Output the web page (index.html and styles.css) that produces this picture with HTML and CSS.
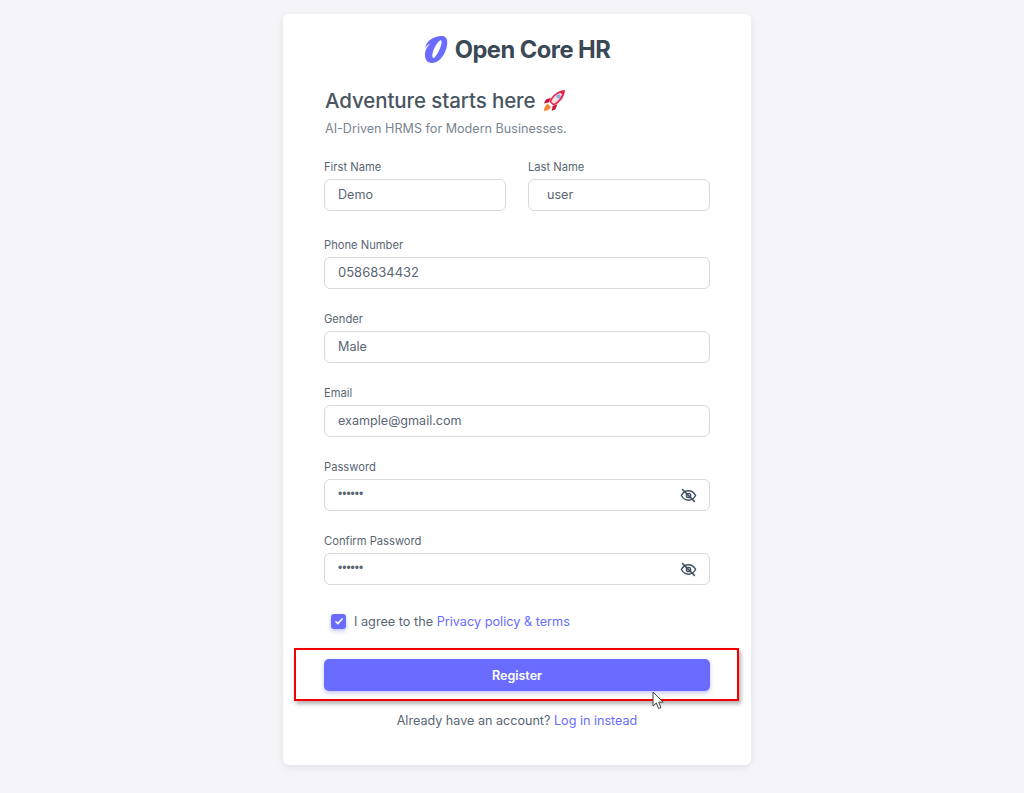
FILE: index.html
```html
<!DOCTYPE html>
<html lang="en">
<head>
  <meta charset="UTF-8" />
  <title>Register - Open Core HR</title>
  <link rel="stylesheet" href="styles.css">
</head>
<body>
  <div class="card">
    <div class="brand">
      <svg class="brand-mark" width="24" height="29" viewBox="0 0 24 29" aria-hidden="true">
        <path fill-rule="evenodd" d="M16.500 1C21 .5 23.500 3 23.300 8 23 15 18.500 25 11 27.500 5.500 29 1.500 26.500 1 21 .6 16 3 11.500 6.500 8.500 4.500 9.300 3 10.500 1.200 13 2 6.500 8.500 1.800 16.500 1zM16 5.500C12.500 8 9 14.500 8.300 20 8 23 9.500 24 11 22 14.500 18 17.800 10.500 17.500 6.500 17.400 5.300 16.800 5 16 5.500z" fill="#696cff"/>
      </svg>
      <span class="brand-name">Open Core HR</span>
    </div>

    <h4 class="title">Adventure starts here
      <svg class="rocket" width="23" height="23" viewBox="0 0 24 24" aria-hidden="true">
        <path d="M8 9L3 11 1 15l5-1zM15 16l-2 5-4 2 1-5z" fill="#c9163f"/>
        <path d="M5 15.500L8.500 19C7 21.500 4 23 1 23c0-3 1.500-6 4-7.500z" fill="#f58a3c"/>
        <path d="M23 1C16 1.500 9.500 6 6.500 13l4.500 4.500C18 14.500 22.500 8 23 1z" fill="#e8234f"/>
        <path d="M18 4c-5 2-8 5.500-9.500 9l2.500 2.500c3.500-1.500 7-5 9-10z" fill="#f4dde0"/>
        <circle cx="16.200" cy="7.800" r="2.200" fill="#7fb2dc"/>
      </svg>
    </h4>
    <p class="subtitle">AI-Driven HRMS for Modern Businesses.</p>

    <form class="form">
      <div class="name-row">
        <div class="field">
          <label>First Name</label>
          <input class="input" type="text" value="Demo">
        </div>
        <div class="field">
          <label>Last Name</label>
          <input class="input input-last" type="text" value="user">
        </div>
      </div>

      <div class="field">
        <label>Phone Number</label>
        <input class="input input-phone" type="text" value="0586834432">
      </div>

      <div class="field">
        <label>Gender</label>
        <input class="input" type="text" value="Male">
      </div>

      <div class="field">
        <label>Email</label>
        <input class="input" type="text" value="example@gmail.com">
      </div>

      <div class="field">
        <label>Password</label>
        <div class="pass-wrap">
          <input class="input input-pass" type="password" value="secret">
          <svg class="eye" width="17" height="17" viewBox="0 0 24 24" aria-hidden="true">
            <path d="M2 12c2.500-4.500 6-6.700 10-6.700s7.500 2.200 10 6.700c-2.500 4.500-6 6.700-10 6.700S4.500 16.500 2 12z"/>
            <circle cx="12" cy="12" r="3"/>
            <path d="M3 3l18 18"/>
          </svg>
        </div>
      </div>

      <div class="field">
        <label>Confirm Password</label>
        <div class="pass-wrap">
          <input class="input input-pass" type="password" value="secret">
          <svg class="eye" width="17" height="17" viewBox="0 0 24 24" aria-hidden="true">
            <path d="M2 12c2.500-4.500 6-6.700 10-6.700s7.500 2.200 10 6.700c-2.500 4.500-6 6.700-10 6.700S4.500 16.500 2 12z"/>
            <circle cx="12" cy="12" r="3"/>
            <path d="M3 3l18 18"/>
          </svg>
        </div>
      </div>

      <div class="agree">
        <span class="check">
          <svg width="10" height="10" viewBox="0 0 10 10" aria-hidden="true">
            <path d="M1.500 5.200l2.400 2.400 4.600-5" fill="none" stroke="#fff" stroke-width="1.500"/>
          </svg>
        </span>
        <span>I agree to the <a href="#">Privacy policy &amp; terms</a></span>
      </div>

      <button class="btn" type="button">Register</button>
    </form>

    <p class="signin">Already have an account? <a href="#">Log in instead</a></p>

    <!-- annotation drawn over the screenshot -->
    <div class="highlight"></div>
    <svg class="cursor" width="13" height="19" viewBox="0 0 13 19" aria-hidden="true">
      <path d="M1 1v14l3.300-3 2.300 5.500 2.400-1-2.300-5.300h4.500z" fill="#fff" stroke="#444" stroke-width="1"/>
    </svg>
  </div>
</body>
</html>
```

FILE: styles.css
```css
* { box-sizing: border-box; margin: 0; padding: 0; }
body {
  font-family: "Inter", "Liberation Sans", sans-serif;
  background: #f5f5f9;
  color: #5a6673;
  min-height: 793px;
  display: flex;
  justify-content: center;
  align-items: flex-start;
  padding-top: 14px;
}
a {
  color: #696cff;
  text-decoration: none;
}
.card {
  position: relative;
  width: 468px;
  height: 751px;
  margin-left: 10px;
  background: #fff;
  border-radius: 6px;
  box-shadow: 0 2px 6px rgba(67, 89, 113, 0.12);
  padding: 18px 41px 0 41px;
}
.brand {
  display: flex;
  justify-content: center;
  align-items: center;
  gap: 7px;
  height: 34px;
  margin-bottom: 21px;
}
.brand-name {
  font-size: 23.700px;
  font-weight: 700;
  letter-spacing: -0.5px;
  color: #3b4856;
}
.title {
  display: flex;
  align-items: center;
  gap: 7px;
  height: 26px;
  padding-left: 1px;
  font-size: 20.500px;
  font-weight: 500;
  letter-spacing: -0.1px;
  color: #4a5562;
  margin-bottom: 7px;
}
.subtitle {
  padding-left: 1px;
  font-size: 12.600px;
  line-height: 18px;
  color: #7a8490;
  margin-bottom: 21px;
}
.form {
  display: flex;
  flex-direction: column;
  gap: 22px;
}
.name-row {
  display: grid;
  grid-template-columns: 182px 182px;
  justify-content: space-between;
  margin-bottom: 4px;
}
.field label {
  display: block;
  font-size: 11.200px;
  line-height: 16px;
  color: #5a6673;
  margin-bottom: 4px;
}
.input {
  display: block;
  width: 100%;
  height: 32px;
  border: 1px solid #d6dade;
  border-radius: 6px;
  padding: 0 13px 2px 13px;
  font-family: inherit;
  font-size: 12.600px;
  color: #5a6673;
  background: #fff;
  outline: none;
}
.input-last { padding-left: 18px; }
.input-phone { font-size: 13px; }
.input-pass {
  font-family: "Liberation Sans", sans-serif;
  font-size: 12px;
}
.pass-wrap { position: relative; }
.eye {
  position: absolute;
  right: 13px;
  top: 8px;
  fill: none;
  stroke: #3f4f60;
  stroke-width: 2;
}
.agree {
  display: flex;
  align-items: center;
  gap: 8px;
  height: 18px;
  margin: 5px 0 0 7px;
  font-size: 12.700px;
  color: #5a6673;
}
.check {
  display: flex;
  align-items: center;
  justify-content: center;
  width: 15px;
  height: 15px;
  border-radius: 3px;
  background: #696cff;
  box-shadow: 0 2px 4px rgba(105, 108, 255, 0.4);
}
.btn {
  display: block;
  width: 100%;
  height: 32px;
  margin-top: 7px;
  border: none;
  border-radius: 5px;
  background: #696cff;
  color: #fff;
  font-family: inherit;
  font-size: 12.500px;
  font-weight: 600;
  box-shadow: 0 2px 4px rgba(105, 108, 255, 0.4);
}
.signin {
  margin-top: 21px;
  font-size: 12.600px;
  line-height: 18px;
  text-align: center;
}
.highlight {
  position: absolute;
  left: 11px;
  top: 634px;
  width: 445px;
  height: 53px;
  border: 2px solid #f40000;
  box-shadow: 2px 3px 4px rgba(0, 0, 0, 0.3);
}
.cursor {
  position: absolute;
  left: 369px;
  top: 677px;
}
```
